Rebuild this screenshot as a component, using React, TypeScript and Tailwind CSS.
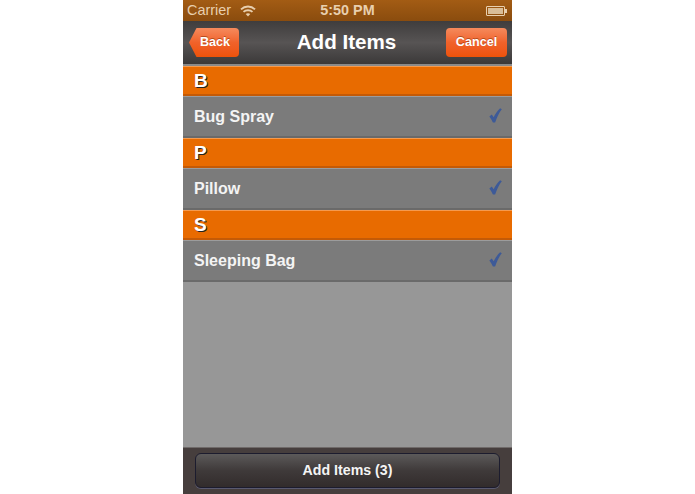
import React from "react";

const sans = "font-['Liberation_Sans',Arial,sans-serif]";

function Wifi() {
  return (
    <svg width="16" height="12" viewBox="0 0 16 12" className="text-[#e8cfae]" fill="none" stroke="currentColor" strokeWidth="1.9">
      <path d="M1 4.4C5 .6 11 .6 15 4.4" />
      <path d="M3.5 6.9C6 4.6 10 4.6 12.5 6.9" />
      <path d="M8 11.4 5.7 9.1C7 8 9 8 10.3 9.1Z" fill="currentColor" stroke="none" />
    </svg>
  );
}

function Battery() {
  return (
    <div className="flex items-center">
      <div className="w-[19px] h-[10px] border border-[#e8cfae] p-px rounded-[1px]">
        <div className="w-full h-full bg-[#d9bd97]" />
      </div>
      <div className="w-[2px] h-[4px] bg-[#e8cfae]" />
    </div>
  );
}

function Check() {
  return (
    <svg width="13" height="15" viewBox="0 0 14 16" className="-mt-[2px]">
      <path d="M0.4 9 3 7 5 10C6.8 6.2 9 2.8 12 0.2L13.8 1.2C10.8 5 8.6 10 6.6 15.6H4.2C3.2 13.2 2 11 0.4 9Z" fill="#3d5a98" />
    </svg>
  );
}

function Section({ letter }: { letter: string }) {
  return (
    <div className="h-[30px] bg-[#e86b00] border-t border-t-[#f59a4e] border-b-2 border-b-[#c45a06] flex items-center pl-[11px] pt-[1px]">
      <span className="text-[19px] font-bold text-white [text-shadow:1px_1px_0_#222]">{letter}</span>
    </div>
  );
}

function Row({ label }: { label: string }) {
  return (
    <div className="h-[42px] bg-[#7b7b7b] border-t border-t-[#9c9c9c] border-b-2 border-b-[#6a6a6a] flex items-center justify-between pl-[11px] pr-[10px]">
      <span className="text-[16px] font-bold text-[#f4f4f4]">{label}</span>
      <Check />
    </div>
  );
}

export default function App() {
  return (
    <div className={`w-[695px] h-[494px] bg-white flex justify-center overflow-hidden ${sans}`}>
      <div className="w-[329px] h-full flex flex-col bg-[#979797]">
        {/* Status bar */}
        <div className="h-[21px] bg-gradient-to-b from-[#a35c14] to-[#8a4c0e] grid grid-cols-3 items-center px-[4px] text-[14.4px] text-[#e8cfae]">
          <div className="flex items-center gap-[9px]">
            <span>Carrier</span>
            <Wifi />
          </div>
          <div className="text-center font-bold whitespace-nowrap">5:50 PM</div>
          <div className="flex justify-end pr-[1px]">
            <Battery />
          </div>
        </div>

        {/* Nav bar */}
        <div className="h-[45px] bg-gradient-to-b from-[#3f3d3d] via-[#575454] to-[#3b3939] border-b-2 border-b-[#8a8a8a] flex items-center pl-[14px] pr-[5px]">
          <div className="relative w-[42px] h-[29px] rounded-r-[4px] bg-gradient-to-b from-[#f58a5c] via-[#f0622a] to-[#ee5208] flex items-center justify-center">
            <svg width="9" height="29" viewBox="0 0 9 29" className="absolute -left-[8px] top-0">
              <defs>
                <linearGradient id="backTip" x1="0" y1="0" x2="0" y2="1">
                  <stop offset="0" stopColor="#f58a5c" />
                  <stop offset="0.5" stopColor="#f0622a" />
                  <stop offset="1" stopColor="#ee5208" />
                </linearGradient>
              </defs>
              <path d="M9 0H7.5L0 14.5 7.5 29H9Z" fill="url(#backTip)" />
            </svg>
            <span className="relative -left-[3px] text-[12.6px] font-bold text-white [text-shadow:0_-1px_0_rgba(120,40,0,.5)]">Back</span>
          </div>
          <span className="flex-1 text-center pl-[8px] text-[20.6px] font-bold text-white">Add Items</span>
          <div className="w-[61px] h-[29px] rounded-[4px] bg-gradient-to-b from-[#f58a5c] via-[#f0622a] to-[#ee5208] flex items-center justify-center">
            <span className="text-[12.6px] font-bold text-white [text-shadow:0_-1px_0_rgba(120,40,0,.5)]">Cancel</span>
          </div>
        </div>

        {/* List */}
        <div className="flex-1 flex flex-col">
          <Section letter="B" />
          <Row label="Bug Spray" />
          <Section letter="P" />
          <Row label="Pillow" />
          <Section letter="S" />
          <Row label="Sleeping Bag" />
        </div>

        {/* Bottom toolbar */}
        <div className="h-[47px] bg-[#463e3d] border-t border-t-[#6f6a69] pt-[5px] px-[12px]">
          <div className="h-[35px] rounded-[6px] border border-[#1c1c2e] bg-gradient-to-b from-[#5c5a5a] via-[#3f3a3a] to-[#322c2c] shadow-[0_1px_0_#5a5a70] flex items-center justify-center">
            <span className="text-[14.2px] font-bold text-[#f4f4f4]">Add Items (3)</span>
          </div>
        </div>
      </div>
    </div>
  );
}
